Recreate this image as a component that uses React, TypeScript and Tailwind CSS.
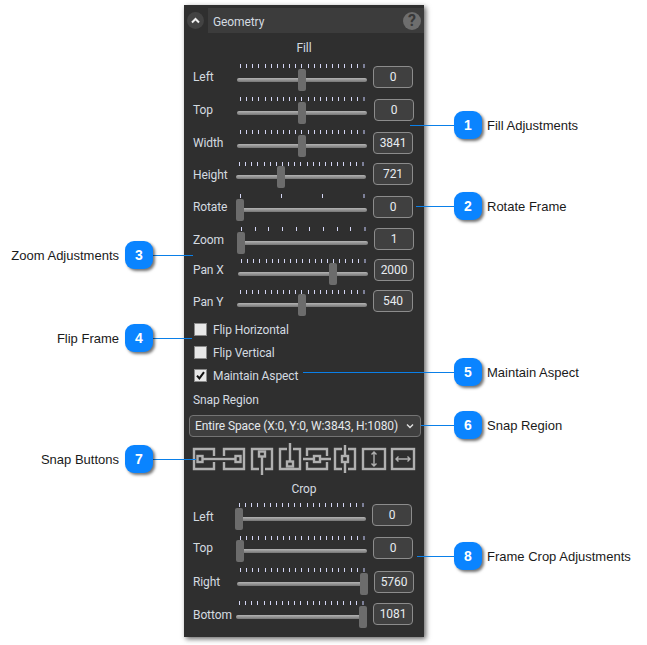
import React from "react";

const UI = "font-['Roboto','Noto_Sans',sans-serif] text-[12px] tracking-[-0.1px]";

type RowCfg = {
  label: string;
  value: string;
  h: string;
  lw: string;
  gap: string;
  thumb: string;
  ticks: number;
  track: string;
  input: string;
  lab: string;
};

const fill: RowCfg[] = [
  { label: "Left", value: "0", h: "h-[33px]", lw: "w-[44px]", gap: "ml-[6px]", thumb: "left-[61px]", ticks: 21, track: "mt-[10px]", input: "mt-[2px]", lab: "mt-[5px]" },
  { label: "Top", value: "0", h: "h-[33px]", lw: "w-[44px]", gap: "ml-[7px]", thumb: "left-[61px]", ticks: 21, track: "mt-[10px]", input: "mt-[2px]", lab: "mt-[5px]" },
  { label: "Width", value: "3841", h: "h-[32px]", lw: "w-[44px]", gap: "ml-[6px]", thumb: "left-[61px]", ticks: 21, track: "mt-[10px]", input: "mt-[2px]", lab: "mt-[5px]" },
  { label: "Height", value: "721", h: "h-[32px]", lw: "w-[43px]", gap: "ml-[7px]", thumb: "left-[41px]", ticks: 21, track: "mt-[9px]", input: "mt-[1px]", lab: "mt-[5px]" },
  { label: "Rotate", value: "0", h: "h-[33px]", lw: "w-[44px]", gap: "ml-[6px]", thumb: "left-[-1px]", ticks: 4, track: "mt-[10px]", input: "mt-[2px]", lab: "mt-[5px]" },
  { label: "Zoom", value: "1", h: "h-[32px]", lw: "w-[45px]", gap: "ml-[6px]", thumb: "left-[-1px]", ticks: 10, track: "mt-[10px]", input: "mt-[1px]", lab: "mt-[5px]" },
  { label: "Pan X", value: "2000", h: "h-[31px]", lw: "w-[45px]", gap: "ml-[6px]", thumb: "left-[91px]", ticks: 21, track: "mt-[9px]", input: "mt-0", lab: "mt-[3px]" },
  { label: "Pan Y", value: "540", h: "h-[28px]", lw: "w-[44px]", gap: "ml-[6px]", thumb: "left-[61px]", ticks: 21, track: "mt-[9px]", input: "mt-0", lab: "mt-[4px]" },
];

const crop: RowCfg[] = [
  { label: "Left", value: "0", h: "h-[33px]", lw: "w-[43px]", gap: "ml-[6px]", thumb: "left-[-1px]", ticks: 21, track: "mt-[10px]", input: "mt-px", lab: "mt-[6px]" },
  { label: "Top", value: "0", h: "h-[32px]", lw: "w-[44px]", gap: "ml-[6px]", thumb: "left-[-1px]", ticks: 21, track: "mt-[9px]", input: "mt-px", lab: "mt-[4px]" },
  { label: "Right", value: "5760", h: "h-[33px]", lw: "w-[44px]", gap: "ml-[7px]", thumb: "left-[123px]", ticks: 21, track: "mt-[10px]", input: "mt-[3px]", lab: "mt-[6px]" },
  { label: "Bottom", value: "1081", h: "h-[30px]", lw: "w-[43px]", gap: "ml-[7px]", thumb: "left-[123px]", ticks: 21, track: "mt-[10px]", input: "mt-[2px]", lab: "mt-[6px]" },
];

function Ticks({ count }: { count: number }) {
  return (
    <div className="flex h-[4px] justify-between pl-[3px] pr-[2px]">
      {Array.from({ length: count }).map((_, i) => (
        <span
          key={i}
          className={
            i === count - 1
              ? "h-[4px] w-[2px] bg-[#7d8098]"
              : "h-[4px] w-px bg-[#d4d6f4]"
          }
        />
      ))}
    </div>
  );
}

function SliderRow({ r }: { r: RowCfg }) {
  return (
    <div className={`flex items-start ${r.h}`}>
      <span className={`h-[17px] shrink-0 leading-[17px] whitespace-nowrap text-[#d4dbe0] ${r.lw} ${r.lab}`}>
        {r.label}
      </span>
      <div className="w-[130px] shrink-0">
        <Ticks count={r.ticks} />
        <div className={`relative h-[4px] rounded-full bg-gradient-to-b from-[#b4b4b4] to-[#767676] ${r.track}`}>
          <span className={`absolute top-[-9px] h-[22px] w-[8px] rounded-[2px] bg-[#6c6c6c] ${r.thumb}`} />
        </div>
      </div>
      <div
        className={`flex h-[22px] w-[40px] shrink-0 items-center justify-center rounded-[4px] border border-[#8c8c8c] bg-[#404040] pb-[1px] leading-none text-[#e8ecf0] ${r.gap} ${r.input}`}
      >
        {r.value}
      </div>
    </div>
  );
}

function Check({ label, checked }: { label: string; checked?: boolean }) {
  return (
    <div className="flex h-[23px] items-center pl-[5px]">
      <span className="flex h-[13px] w-[13px] items-center justify-center border border-[#8a8a8a] bg-[#e8e8e8]">
        {checked && (
          <svg width="11" height="11" viewBox="0 0 11 11">
            <path d="M2 5.6 L4.4 8.4 L9 2.2" fill="none" stroke="#111" strokeWidth="2" />
          </svg>
        )}
      </span>
      <span className="ml-[6px] leading-none text-[#d4dbe0]">{label}</span>
    </div>
  );
}

const C = "#b0b0b0";

function SnapIcon({ kind, className }: { kind: number; className?: string }) {
  let body: React.ReactNode = null;
  const H = <path d="M4 12 V5 H24 V12 M4 18 V25 H24 V18" />;
  const V = <path d="M11 5 H4 V25 H11 M17 5 H24 V25 H17" />;
  if (kind === 1)
    body = (
      <>
        <path d="M24 12 V5 H4 V25 H24 V18" />
        <path d="M12 15 H29" />
        <rect x="7.5" y="12" width="5" height="6" />
      </>
    );
  if (kind === 2)
    body = (
      <>
        <path d="M4 12 V5 H24 V25 H4 V18" />
        <path d="M-1 15 H16" />
        <rect x="15.5" y="12" width="5" height="6" />
      </>
    );
  if (kind === 3)
    body = (
      <>
        {V}
        <path d="M11 5 H17 M14 13 V31" />
        <rect x="11" y="7.5" width="6" height="5" />
      </>
    );
  if (kind === 4)
    body = (
      <>
        {V}
        <path d="M11 25 H17 M14 -1 V17" />
        <rect x="11" y="17.5" width="6" height="5" />
      </>
    );
  if (kind === 5)
    body = (
      <>
        {H}
        <path d="M0 15 H11 M17 15 H28" />
        <rect x="11" y="12" width="6" height="6" />
      </>
    );
  if (kind === 6)
    body = (
      <>
        {V}
        <path d="M14 1 V12 M14 18 V29" />
        <rect x="11" y="12" width="6" height="6" />
      </>
    );
  if (kind === 7)
    body = (
      <>
        <rect x="3" y="5" width="22" height="20" />
        <path d="M14 8 V22 M11.5 10.5 L14 8 L16.5 10.5 M11.5 19.5 L14 22 L16.5 19.5" strokeWidth="1.4" />
      </>
    );
  if (kind === 8)
    body = (
      <>
        <rect x="3" y="5" width="22" height="20" />
        <path d="M7 15 H21 M9.5 12.5 L7 15 L9.5 17.5 M18.5 12.5 L21 15 L18.5 17.5" strokeWidth="1.4" />
      </>
    );
  return (
    <svg
      width="28"
      height="30"
      viewBox="0 0 28 30"
      fill="none"
      stroke={C}
      strokeWidth="2.4"
      className={`shrink-0 overflow-visible ${className ?? ""}`}
    >
      {body}
    </svg>
  );
}

type Call = {
  n: number;
  text: string;
  y: string;
  line: string;
  side: "r" | "l";
};

const calls: Call[] = [
  { n: 1, text: "Fill Adjustments", y: "top-[111px]", line: "left-[410px] w-[44px] top-[125px]", side: "r" },
  { n: 2, text: "Rotate Frame", y: "top-[192px]", line: "left-[416px] w-[38px] top-[206px]", side: "r" },
  { n: 3, text: "Zoom Adjustments", y: "top-[241px]", line: "left-[153px] w-[40px] top-[255px]", side: "l" },
  { n: 4, text: "Flip Frame", y: "top-[324px]", line: "left-[153px] w-[39px] top-[338px]", side: "l" },
  { n: 5, text: "Maintain Aspect", y: "top-[358px]", line: "left-[303px] w-[151px] top-[372px]", side: "r" },
  { n: 6, text: "Snap Region", y: "top-[411px]", line: "left-[421px] w-[33px] top-[425px]", side: "r" },
  { n: 7, text: "Snap Buttons", y: "top-[445px]", line: "left-[153px] w-[43px] top-[459px]", side: "l" },
  { n: 8, text: "Frame Crop Adjustments", y: "top-[542px]", line: "left-[417px] w-[37px] top-[556px]", side: "r" },
];

function Callout({ c }: { c: Call }) {
  const badge = (
    <span className="flex h-[28px] w-[28px] shrink-0 items-center justify-center rounded-[9px] bg-[#0a84ff] text-[14px] font-bold text-white shadow-[2px_2px_3px_rgba(0,0,0,0.55)]">
      {c.n}
    </span>
  );
  return (
    <>
      <div className={`absolute h-px bg-[#0a7fe8] ${c.line}`} />
      {c.side === "r" ? (
        <div className={`absolute left-[454px] flex items-center gap-[5px] ${c.y}`}>
          {badge}
          <span className="text-[13px] leading-none whitespace-nowrap text-[#1a1a1a]">{c.text}</span>
        </div>
      ) : (
        <div className={`absolute right-[494px] flex items-center gap-[6px] ${c.y}`}>
          <span className="text-[13px] leading-none whitespace-nowrap text-[#1a1a1a]">{c.text}</span>
          {badge}
        </div>
      )}
    </>
  );
}

export default function App() {
  return (
    <div className="relative h-[645px] w-[647px] overflow-hidden bg-white font-['Liberation_Sans',Arial,sans-serif]">
      <div className="pl-[184px] pt-[5px]">
        <div className={`h-[632px] w-[240px] bg-[#2f2f2f] pt-[3px] shadow-[2px_2px_5px_rgba(0,0,0,0.6)] ${UI}`}>
          <div className="flex h-[25px] items-center pl-[3px]">
            <span className="flex h-[17px] w-[17px] items-center justify-center rounded-full bg-[#434343]">
              <svg width="9" height="7" viewBox="0 0 9 7">
                <path d="M1 5.5 L4.5 2 L8 5.5" fill="none" stroke="#f0f0f0" strokeWidth="2" />
              </svg>
            </span>
            <div className="ml-[4px] flex h-[25px] flex-1 items-center justify-between bg-[#3c3c3c] pl-[5px] pr-[3px]">
              <span className="pt-[2px] leading-none text-[#d4dbe0]">Geometry</span>
              <span className="flex h-[18px] w-[18px] items-center justify-center rounded-full bg-[#6e6e6e] text-[16px] leading-none font-bold text-[#383838]">
                ?
              </span>
            </div>
          </div>
          <div className="mb-[3px] flex h-[28px] items-center justify-center pt-px leading-none text-[#d4dbe0]">Fill</div>
          <div className="flex flex-col pl-[9px]">
            {fill.map((r) => (
              <SliderRow key={r.label} r={r} />
            ))}
          </div>
          <div className="pl-[5px]">
            <Check label="Flip Horizontal" />
            <Check label="Flip Vertical" />
            <Check label="Maintain Aspect" checked />
            <div className="mt-[5px] h-[16px] pl-[4px] leading-[16px] text-[#d4dbe0]">Snap Region</div>
            <div className="mt-[7px] flex h-[22px] w-[232px] items-center justify-between rounded-[4px] border border-[#747474] bg-[#3f3f3f] pl-[5px] pr-[6px] leading-none text-[#e4e8ec]">
              <span className="whitespace-nowrap">Entire Space (X:0, Y:0, W:3843, H:1080)</span>
              <svg width="8" height="6" viewBox="0 0 8 6">
                <path d="M1 1.5 L4 4.5 L7 1.5" fill="none" stroke="#e0e0e0" strokeWidth="1.4" />
              </svg>
            </div>
            <div className="mt-[7px] flex pl-px">
              <SnapIcon kind={1} />
              <SnapIcon kind={2} className="ml-[2px]" />
              <SnapIcon kind={3} />
              <SnapIcon kind={4} />
              <SnapIcon kind={5} className="ml-[-1px]" />
              <SnapIcon kind={6} />
              <SnapIcon kind={7} className="ml-px" />
              <SnapIcon kind={8} className="ml-px" />
            </div>
          </div>
          <div className="mt-[6px] flex h-[16px] items-center justify-center pt-px leading-none text-[#d4dbe0]">Crop</div>
          <div className="mt-[7px] flex flex-col pl-[9px]">
            {crop.map((r) => (
              <SliderRow key={r.label} r={r} />
            ))}
          </div>
        </div>
      </div>
      {calls.map((c) => (
        <Callout key={c.n} c={c} />
      ))}
    </div>
  );
}
